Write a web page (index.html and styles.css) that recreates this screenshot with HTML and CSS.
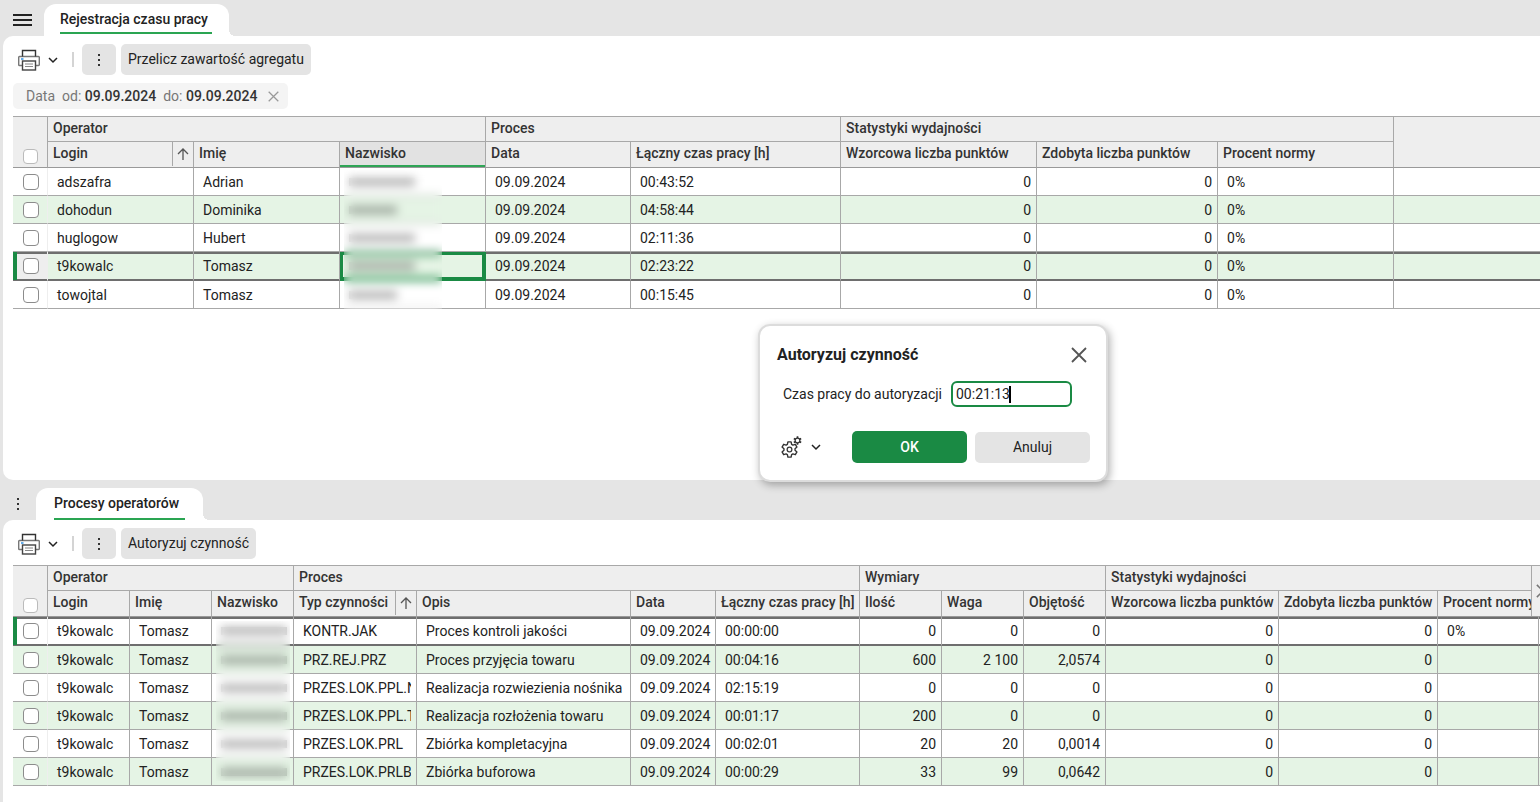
FILE: index.html
```html
<!DOCTYPE html>
<html lang="pl">
<head>
	<meta charset="UTF-8">
	<title>Rejestracja czasu pracy</title>
	<link rel="stylesheet" href="styles.css">
</head>
<body>
	<svg class="symbols" aria-hidden="true">
		<symbol id="printer" viewBox="0 0 22 22">
			<path d="M4.500 16.500h-3a.8.8 0 0 1-.8-.8v-7.400a.8.8 0 0 1 .8-.8h19a.8.8 0 0 1 .8.8v7.400a.8.8 0 0 1-.8.8h-3" fill="none" stroke="#777" stroke-width="1.400"/>
			<path d="M4.500 7.500v-6h13v6" fill="none" stroke="#333" stroke-width="1.400"/>
			<rect x="4.500" y="12" width="13" height="9" fill="#fff" stroke="#444" stroke-width="1.400"/>
			<path d="M7 15h8M7 17.500h8" stroke="#888" stroke-width="1.200"/>
			<path d="M3 10h2.500" stroke="#2f8fe0" stroke-width="1.500"/>
		</symbol>
		<symbol id="chevron" viewBox="0 0 10 10"><path d="M1 3l4 4 4-4" fill="none" stroke="#222" stroke-width="1.500"/></symbol>
		<symbol id="dots" viewBox="0 0 4 14"><path d="M1 1h2v2H1zM1 6h2v2H1zM1 11h2v2H1z" fill="#333"/></symbol>
		<symbol id="arrow" viewBox="0 0 12 12"><path d="M6 12V1M1 6l5-5 5 5" fill="none" stroke="#555" stroke-width="1.300"/></symbol>
		<symbol id="cross" viewBox="0 0 16 16"><path d="M1 1l14 14M15 1L1 15" fill="none" stroke="currentColor" stroke-width="1.800"/></symbol>
		<symbol id="gear" viewBox="-8 -8 16 16">
			<path d="M-2-4.800L-1.500-7.200H1.500L2-4.800 3.200-4.100 5.500-4.900 7-2.300 5.200-.7V.7L7 2.300 5.500 4.900 3.200 4.100 2 4.800 1.500 7.200H-1.500L-2 4.800-3.200 4.100-5.500 4.900-7 2.300-5.200.7V-.7L-7-2.300-5.500-4.900-3.200-4.100z" fill="none" stroke="#333" stroke-width="1.300" stroke-linejoin="round"/>
			<circle r="2.200" fill="none" stroke="#333" stroke-width="1.200"/>
		</symbol>
		<symbol id="gear-small" viewBox="-8 -8 16 16">
			<path d="M0-7.500V-4.500M0 7.500V4.500M6.500-3.700L4-2.300M-6.500 3.700L-4 2.300M6.500 3.700L4 2.300M-6.500-3.700L-4-2.300" stroke="#333" stroke-width="3"/>
			<circle r="4.200" fill="none" stroke="#333" stroke-width="2.200"/>
		</symbol>
	</svg>

	<section class="pane">
		<div class="tabbar">
			<button class="menu" aria-label="Menu"><span></span><span></span><span></span></button>
			<a class="tab" href="#"><span>Rejestracja czasu pracy</span></a>
		</div>
		<div class="card">
			<div class="toolbar">
				<button class="plain" aria-label="Drukuj"><svg class="i-printer"><use href="#printer"/></svg><svg class="i-chevron"><use href="#chevron"/></svg></button>
				<span class="divider"></span>
				<button class="btn more" aria-label="Więcej"><svg class="i-dots"><use href="#dots"/></svg></button>
				<button class="btn">Przelicz zawartość agregatu</button>
			</div>
			<div class="filter">
				<span>Data</span>
				<span>od: <b>09.09.2024</b></span>
				<span>do: <b>09.09.2024</b></span>
				<button class="plain clear" aria-label="Usuń filtr"><svg class="i-clear"><use href="#cross"/></svg></button>
			</div>
			<div class="grid">
				<table>
					<colgroup>
						<col style="width:35px"><col style="width:146px"><col style="width:146px"><col style="width:146px"><col style="width:145px"><col style="width:210px"><col style="width:196px"><col style="width:181px"><col style="width:176px"><col>
					</colgroup>
					<thead>
						<tr>
							<th rowspan="2" class="check"><input type="checkbox" aria-label="Zaznacz wszystkie"></th>
							<th colspan="3">Operator</th>
							<th colspan="2">Proces</th>
							<th colspan="3">Statystyki wydajności</th>
							<th rowspan="2"></th>
						</tr>
						<tr>
							<th><div class="sorted">Login<svg class="i-arrow"><use href="#arrow"/></svg></div></th>
							<th>Imię</th>
							<th class="current">Nazwisko</th>
							<th>Data</th>
							<th>Łączny czas pracy [h]</th>
							<th>Wzorcowa liczba punktów</th>
							<th>Zdobyta liczba punktów</th>
							<th>Procent normy</th>
						</tr>
					</thead>
					<tbody>
						<tr><td class="check"><input type="checkbox" aria-label="adszafra"></td><td>adszafra</td><td>Adrian</td><td><i class="hidden-name"></i></td><td>09.09.2024</td><td>00:43:52</td><td class="num">0</td><td class="num">0</td><td>0%</td><td></td></tr>
						<tr><td class="check"><input type="checkbox" aria-label="dohodun"></td><td>dohodun</td><td>Dominika</td><td><i class="hidden-name short"></i></td><td>09.09.2024</td><td>04:58:44</td><td class="num">0</td><td class="num">0</td><td>0%</td><td></td></tr>
						<tr><td class="check"><input type="checkbox" aria-label="huglogow"></td><td>huglogow</td><td>Hubert</td><td><i class="hidden-name"></i></td><td>09.09.2024</td><td>02:11:36</td><td class="num">0</td><td class="num">0</td><td>0%</td><td></td></tr>
						<tr class="selected"><td class="check"><input type="checkbox" aria-label="t9kowalc"></td><td>t9kowalc</td><td>Tomasz</td><td class="focus"><i class="hidden-name"></i></td><td>09.09.2024</td><td>02:23:22</td><td class="num">0</td><td class="num">0</td><td>0%</td><td></td></tr>
						<tr><td class="check"><input type="checkbox" aria-label="towojtal"></td><td>towojtal</td><td>Tomasz</td><td><i class="hidden-name short"></i></td><td>09.09.2024</td><td>00:15:45</td><td class="num">0</td><td class="num">0</td><td>0%</td><td></td></tr>
					</tbody>
				</table>
				<div class="veil veil-top"></div>
			</div>
		</div>
	</section>

	<section class="pane lower">
		<div class="tabbar">
			<button class="plain handle" aria-label="Opcje panelu"><svg class="i-dots"><use href="#dots"/></svg></button>
			<a class="tab" href="#"><span>Procesy operatorów</span></a>
		</div>
		<div class="card">
			<div class="toolbar">
				<button class="plain" aria-label="Drukuj"><svg class="i-printer"><use href="#printer"/></svg><svg class="i-chevron"><use href="#chevron"/></svg></button>
				<span class="divider"></span>
				<button class="btn more" aria-label="Więcej"><svg class="i-dots"><use href="#dots"/></svg></button>
				<button class="btn">Autoryzuj czynność</button>
			</div>
			<div class="grid">
				<table>
					<colgroup>
						<col style="width:35px"><col style="width:82px"><col style="width:82px"><col style="width:82px"><col style="width:123px"><col style="width:214px"><col style="width:85px"><col style="width:144px"><col style="width:82px"><col style="width:82px"><col style="width:82px"><col style="width:173px"><col style="width:159px"><col style="width:101px"><col>
					</colgroup>
					<thead>
						<tr>
							<th rowspan="2" class="check"><input type="checkbox" aria-label="Zaznacz wszystkie"></th>
							<th colspan="3">Operator</th>
							<th colspan="4">Proces</th>
							<th colspan="3">Wymiary</th>
							<th colspan="3">Statystyki wydajności</th>
							<th rowspan="2"></th>
						</tr>
						<tr>
							<th>Login</th>
							<th>Imię</th>
							<th>Nazwisko</th>
							<th><div class="sorted">Typ czynności<svg class="i-arrow"><use href="#arrow"/></svg></div></th>
							<th>Opis</th>
							<th>Data</th>
							<th>Łączny czas pracy [h]</th>
							<th>Ilość</th>
							<th>Waga</th>
							<th>Objętość</th>
							<th>Wzorcowa liczba punktów</th>
							<th>Zdobyta liczba punktów</th>
							<th>Procent normy</th>
						</tr>
					</thead>
					<tbody>
						<tr class="selected"><td class="check"><input type="checkbox" aria-label="KONTR.JAK"></td><td>t9kowalc</td><td>Tomasz</td><td><i class="hidden-name"></i></td><td>KONTR.JAK</td><td>Proces kontroli jakości</td><td>09.09.2024</td><td>00:00:00</td><td class="num">0</td><td class="num">0</td><td class="num">0</td><td class="num">0</td><td class="num">0</td><td>0%</td><td></td></tr>
						<tr><td class="check"><input type="checkbox" aria-label="PRZ.REJ.PRZ"></td><td>t9kowalc</td><td>Tomasz</td><td><i class="hidden-name"></i></td><td>PRZ.REJ.PRZ</td><td>Proces przyjęcia towaru</td><td>09.09.2024</td><td>00:04:16</td><td class="num">600</td><td class="num">2 100</td><td class="num">2,0574</td><td class="num">0</td><td class="num">0</td><td></td><td></td></tr>
						<tr><td class="check"><input type="checkbox" aria-label="PRZES.LOK.PPL.N"></td><td>t9kowalc</td><td>Tomasz</td><td><i class="hidden-name"></i></td><td><div class="clip">PRZES.LOK.PPL.N</div></td><td>Realizacja rozwiezienia nośnika</td><td>09.09.2024</td><td>02:15:19</td><td class="num">0</td><td class="num">0</td><td class="num">0</td><td class="num">0</td><td class="num">0</td><td></td><td></td></tr>
						<tr><td class="check"><input type="checkbox" aria-label="PRZES.LOK.PPL.T"></td><td>t9kowalc</td><td>Tomasz</td><td><i class="hidden-name"></i></td><td><div class="clip">PRZES.LOK.PPL.T</div></td><td>Realizacja rozłożenia towaru</td><td>09.09.2024</td><td>00:01:17</td><td class="num">200</td><td class="num">0</td><td class="num">0</td><td class="num">0</td><td class="num">0</td><td></td><td></td></tr>
						<tr><td class="check"><input type="checkbox" aria-label="PRZES.LOK.PRL"></td><td>t9kowalc</td><td>Tomasz</td><td><i class="hidden-name"></i></td><td>PRZES.LOK.PRL</td><td>Zbiórka kompletacyjna</td><td>09.09.2024</td><td>00:02:01</td><td class="num">20</td><td class="num">20</td><td class="num">0,0014</td><td class="num">0</td><td class="num">0</td><td></td><td></td></tr>
						<tr><td class="check"><input type="checkbox" aria-label="PRZES.LOK.PRLB"></td><td>t9kowalc</td><td>Tomasz</td><td><i class="hidden-name"></i></td><td><div class="clip">PRZES.LOK.PRLB</div></td><td>Zbiórka buforowa</td><td>09.09.2024</td><td>00:00:29</td><td class="num">33</td><td class="num">99</td><td class="num">0,0642</td><td class="num">0</td><td class="num">0</td><td></td><td></td></tr>
					</tbody>
				</table>
				<div class="veil veil-bottom"></div>
				<button class="next" aria-label="Następne kolumny"><svg class="i-next"><use href="#cross"/></svg></button>
			</div>
		</div>
	</section>

	<form class="dialog" role="dialog" aria-labelledby="dialogTitle">
		<div class="dialog-head">
			<h2 id="dialogTitle">Autoryzuj czynność</h2>
			<button type="button" class="plain close" aria-label="Zamknij"><svg class="i-close"><use href="#cross"/></svg></button>
		</div>
		<div class="field">
			<label for="workTime">Czas pracy do autoryzacji</label>
			<div class="input-wrap">
				<input type="text" id="workTime" value="00:21:13">
				<span class="caret"></span>
			</div>
		</div>
		<div class="dialog-foot">
			<button type="button" class="plain" aria-label="Ustawienia"><svg class="i-gears"><use href="#gear" x="0" y="5" width="17" height="17"/><use href="#gear-small" x="12" y="0" width="9" height="9"/></svg><svg class="i-chevron"><use href="#chevron"/></svg></button>
			<button type="button" class="btn primary">OK</button>
			<button type="button" class="btn">Anuluj</button>
		</div>
	</form>
</body>
</html>
```
FILE: styles.css
```css
* {
	box-sizing: border-box;
}

body {
	margin: 0;
	height: 100vh;
	display: grid;
	grid-template-rows: 1fr auto;
	grid-template-columns: minmax(0, 1fr);
	overflow: hidden;
	position: relative;
	background: #e5e5e5;
	color: #222;
	font-family: Roboto, sans-serif;
	font-size: 14px;
	line-height: 18px;
}

button {
	font: inherit;
	color: inherit;
	border: 0;
	padding: 0;
	cursor: pointer;
}

svg {
	display: block;
	flex: none;
}

.symbols {
	position: absolute;
	width: 0;
	height: 0;
}

/* icons */
.i-printer { width: 22px; height: 22px; }
.i-chevron { width: 10px; height: 10px; }
.i-dots { width: 4px; height: 14px; }
.i-arrow { width: 12px; height: 12px; }
.i-clear { width: 11px; height: 11px; }
.i-close { width: 16px; height: 16px; }
.i-gears { width: 22px; height: 22px; }
.i-next { width: 14px; height: 14px; }

/* panes and tabs */
.pane {
	display: flex;
	flex-direction: column;
	padding-left: 3px;
}

.tabbar {
	display: flex;
	align-items: flex-end;
	height: 36px;
}

.lower .tabbar {
	height: 40px;
}

.menu {
	display: flex;
	flex-direction: column;
	gap: 3px;
	width: 19px;
	margin: 0 12px 10px 10px;
	background: none;
}

.menu span {
	height: 2px;
	background: #222;
}

.tab {
	position: relative;
	height: 32px;
	padding: 6px 17px 0 16px;
	border-radius: 12px 12px 0 0;
	background: #fff;
	color: #222;
	font-weight: 500;
	text-decoration: none;
}

.tab::after {
	content: "";
	position: absolute;
	left: 100%;
	bottom: 0;
	width: 6px;
	height: 6px;
	background: radial-gradient(circle at 100% 0, #e5e5e5 6px, #fff 6px);
}

.tab span {
	display: block;
	height: 24px;
	padding-right: 4px;
	border-bottom: 2px solid #2aa552;
}

.lower .tab {
	padding: 6px 18px 0;
}

.lower .tab span {
	height: 26px;
	padding-right: 6px;
}

.handle {
	margin: 0 16px 9px 13px;
}

.card {
	flex: 1;
	padding: 8px 0 16px 10px;
	border-radius: 10px 0 0 10px;
	background: #fff;
}

.lower .card {
	border-radius: 10px 0 0 0;
}

/* toolbar */
.toolbar {
	display: flex;
	align-items: center;
	margin-bottom: 6px;
}

.plain {
	display: flex;
	align-items: center;
	gap: 8px;
	background: none;
}

.toolbar .plain {
	margin-left: 5px;
}

.divider {
	width: 2px;
	height: 15px;
	margin: 0 8px 0 14px;
	background: #d4d4d4;
}

.btn {
	height: 31px;
	padding: 0 7px 2px;
	border-radius: 5px;
	background: #e4e4e4;
}

.more {
	display: flex;
	align-items: center;
	justify-content: center;
	width: 34px;
	padding-bottom: 0;
	margin-right: 5px;
}

.filter {
	display: inline-flex;
	align-items: center;
	gap: 7px;
	height: 26px;
	margin: 2px 0 7px;
	padding: 0 9px 0 13px;
	border-radius: 5px;
	background: #f4f4f4;
	color: #777;
	vertical-align: top;
}

.filter b {
	font-weight: 500;
	color: #333;
}

.clear {
	margin-left: 4px;
	color: #999;
}

/* tables */
.grid {
	position: relative;
	overflow: hidden;
}

table {
	width: 100%;
	table-layout: fixed;
	border-collapse: separate;
	border-spacing: 0;
	border-top: 1px solid #a8a8a8;
}

th,
td {
	padding: 0 5px;
	border-right: 1px solid #a8a8a8;
	border-bottom: 1px solid #a8a8a8;
	white-space: nowrap;
	overflow: hidden;
	text-align: left;
}

th:last-child,
td:last-child {
	border-right: 0;
}

thead tr + tr th:last-child {
	border-right: 1px solid #a8a8a8;
}

th {
	height: 25px;
	padding-right: 0;
	padding-bottom: 2px;
	background: #eee;
	color: #333;
	font-weight: 500;
}

thead tr + tr th,
th[rowspan] {
	border-bottom-color: #999;
}

thead tr + tr th {
	height: 26px;
	padding-bottom: 4px;
}

thead tr + tr th:has(.sorted) {
	padding-bottom: 0;
}

td {
	height: 28px;
	padding-left: 9px;
}

tbody tr:nth-child(even) td {
	background: #e5f4e5;
}

th.current {
	background: #e2e2e2;
	box-shadow: inset 0 -2px #2fa556;
}

.sorted {
	display: flex;
	justify-content: space-between;
	height: 25px;
	line-height: 22px;
}

.sorted svg {
	box-sizing: content-box;
	padding: 6px 4px;
	border-left: 1px solid #a8a8a8;
}

.num {
	text-align: right;
}

.check {
	padding: 0 0 0 10px;
}

td.check {
	border-right-color: #eee;
}

th.check {
	vertical-align: bottom;
	padding-bottom: 3px;
}

.check input {
	appearance: none;
	display: block;
	width: 16px;
	height: 16px;
	margin: 0;
	border: 1px solid #8c8c8c;
	border-radius: 4px;
	background: #fff;
}

th.check input {
	width: 15px;
	height: 15px;
	border-color: #bbb;
}

.clip {
	overflow: hidden;
}

.selected td {
	height: 29px;
	border-bottom-color: #6e6e6e;
	box-shadow: inset 0 2px #6e6e6e, inset 0 -1px #6e6e6e;
}

.selected td.check {
	background: #eee;
	box-shadow: inset 4px 0 #1a8a44, inset 0 2px #6e6e6e, inset 0 -1px #6e6e6e;
}

.lower .selected td.check {
	background: #fff;
}

.selected td.focus {
	border-color: #1a8a44;
	box-shadow: inset 0 0 0 3px #1a8a44;
}

/* surnames are masked: a grey bar under a blurred strip */
.hidden-name {
	display: block;
	width: 66px;
	height: 8px;
	background: rgba(0, 0, 0, 0.3);
}

.hidden-name.short {
	width: 48px;
}

.veil {
	position: absolute;
	backdrop-filter: blur(5px);
}

.veil-top {
	left: 331px;
	top: 54px;
	width: 98px;
	bottom: 0;
}

.veil-bottom {
	left: 203px;
	top: 56px;
	width: 74px;
	bottom: 5px;
}

.next {
	position: absolute;
	top: 1px;
	right: 0;
	width: 9px;
	height: 50px;
	padding-left: 4px;
	overflow: hidden;
	border-left: 1px solid #a8a8a8;
	background: #eee;
	color: #777;
}

/* dialog */
.dialog {
	position: absolute;
	left: 758px;
	top: 324px;
	width: 350px;
	padding: 20px 16px 17px 17px;
	border: 2px solid #dcdcdc;
	border-radius: 12px;
	background: #fff;
	box-shadow: 2px 3px 8px rgba(0, 0, 0, 0.3);
}

.dialog-head {
	display: flex;
	align-items: center;
	justify-content: space-between;
	padding-right: 3px;
}

.dialog h2 {
	margin: 0;
	font-size: 16px;
	font-weight: 700;
}

.close {
	color: #555;
}

.field {
	display: flex;
	align-items: center;
	gap: 9px;
	margin: 17px 0 24px 6px;
}

.input-wrap {
	position: relative;
}

.input-wrap input {
	display: block;
	width: 121px;
	height: 26px;
	padding: 0 3px;
	border: 2px solid #1a8a44;
	border-radius: 6px;
	outline: none;
	background: #fff;
	color: #222;
	font: inherit;
}

.caret {
	position: absolute;
	left: 58px;
	top: 5px;
	width: 2px;
	height: 17px;
	background: #000;
}

.dialog-foot {
	display: flex;
	align-items: center;
	gap: 8px;
}

.dialog-foot .plain {
	margin: 0 auto 0 4px;
}

.dialog-foot .btn {
	width: 115px;
	padding-bottom: 0;
}

.dialog .primary {
	height: 32px;
	background: #1a8a44;
	color: #fff;
	font-weight: 500;
}
```
